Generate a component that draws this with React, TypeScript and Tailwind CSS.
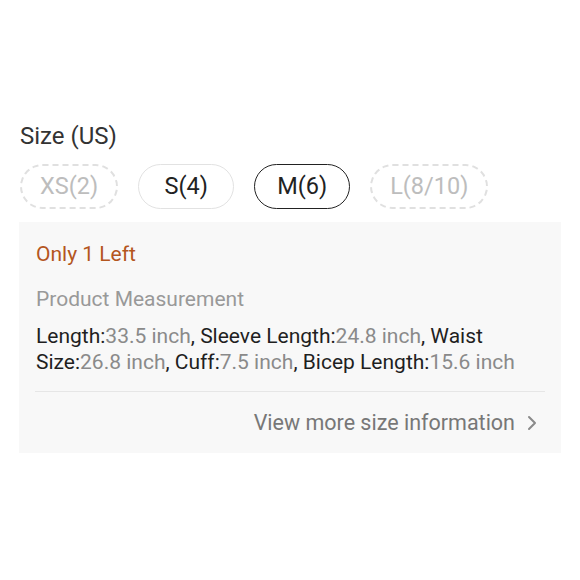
import React from "react";

type Size = { label: string; state: "off" | "on" | "picked" };

const sizes: Size[] = [
  { label: "XS(2)", state: "off" },
  { label: "S(4)", state: "on" },
  { label: "M(6)", state: "picked" },
  { label: "L(8/10)", state: "off" },
];

const specs = [
  ["Length:", "33.5 inch"],
  ["Sleeve Length:", "24.8 inch"],
  ["Waist Size:", "26.8 inch"],
  ["Cuff:", "7.5 inch"],
  ["Bicep Length:", "15.6 inch"],
];

function SizeChip({ size }: { size: Size }) {
  const look =
    size.state === "off"
      ? "border-2 border-dashed border-[#e0e0e0] text-[#bdbdbd]"
      : size.state === "picked"
      ? "border-[1.5px] border-[#222] text-[#222]"
      : "border-[1.5px] border-[#e2e2e2] text-[#222]";
  return (
    <div
      className={`h-[45px] min-w-[96px] px-[18px] rounded-full flex items-center justify-center text-[23.5px] ${look}`}
    >
      {size.label}
    </div>
  );
}

export default function App() {
  return (
    <div className="w-[580px] h-[580px] bg-white font-['Roboto',sans-serif] pt-[119px]">
      <div className="px-5 text-[24px] leading-[34px] text-[#333]">Size (US)</div>

      <div className="mt-[11px] px-5 flex gap-5">
        {sizes.map((s) => (
          <SizeChip key={s.label} size={s} />
        ))}
      </div>

      <div className="mt-[13px] mx-[19px] bg-[#f8f8f8] px-[16px] pt-[18px] pb-[16px]">
        <div className="text-[21px] leading-[28px] text-[#b4561e] pl-[1px]">Only 1 Left</div>
        <div className="mt-[17px] text-[21px] leading-[28px] text-[#999] pl-[1px]">
          Product Measurement
        </div>
        <p className="mt-[10px] text-[21px] leading-[26px] text-[#1f1f1f] pl-[1px]">
          {specs.map(([k, v], i) => (
            <React.Fragment key={k}>
              {k}
              <span className="text-[#8a8a8a]">{v}</span>
              {i < specs.length - 1 ? ", " : ""}
            </React.Fragment>
          ))}
        </p>
        <div className="mt-[16px] border-t border-[#e6e6e6]" />
        <div className="mt-[17px] flex items-center justify-end gap-3 pr-[8px] text-[21.5px] leading-[28px] text-[#777]">
          <span>View more size information</span>
          <svg width="10" height="16" viewBox="0 0 10 16" fill="none">
            <path d="M2 2l6 6-6 6" stroke="#8a8a8a" strokeWidth="2" strokeLinecap="round" strokeLinejoin="round" />
          </svg>
        </div>
      </div>
    </div>
  );
}
